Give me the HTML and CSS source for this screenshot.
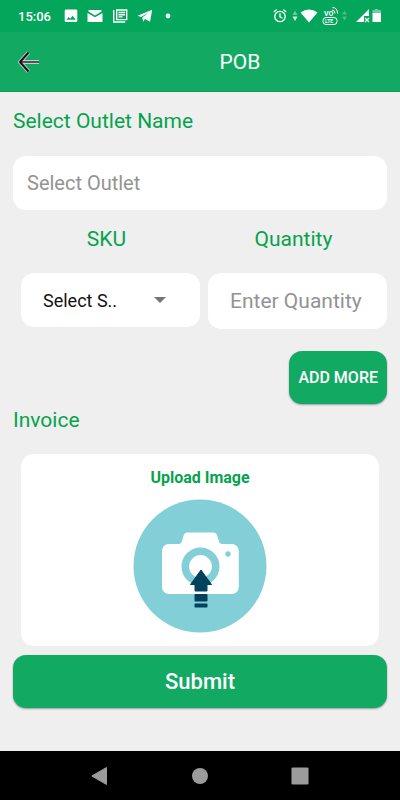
FILE: index.html
```html
<!DOCTYPE html>
<html lang="en">
<head>
<meta charset="utf-8">
<meta name="viewport" content="width=device-width, initial-scale=1">
<title>POB</title>
<link rel="stylesheet" href="styles.css">
</head>
<body>
<div class="status">
  <div class="status-group">
    <span class="clock">15:06</span>
    <svg width="14" height="14" viewBox="0 0 14 14"><path fill="#fff" fill-rule="evenodd" d="M2 .5h10a1.300 1.300 0 0 1 1.300 1.300v10a1.300 1.300 0 0 1-1.300 1.300H2A1.300 1.300 0 0 1 .7 11.800v-10A1.300 1.300 0 0 1 2 .5zM2.500 10.700h9L8.700 6.800 6.300 9.700 4.600 7.900z"/></svg>
    <svg width="16" height="14" viewBox="0 0 16 14"><path fill="#fff" d="M1.500 1h13v1.600L8 6.400 1.500 2.600zM.5 4L8 8.200 15.500 4v9H.5z"/></svg>
    <svg width="16" height="14" viewBox="0 0 16 14"><path fill="none" stroke="#fff" stroke-width="1.400" d="M1.700 1v12h11.500M4.700 1h10v9.600h-10zM6.500 3.500h6.500M6.500 5.700h6.500M6.500 7.900h4"/></svg>
    <svg width="16" height="14" viewBox="0 0 16 14"><path fill="#fff" d="M15.200.8L13 12.800 8 9.900 6.200 12.700 5.300 8.500 11.500 3.600 4 8 .6 6.800z"/></svg>
    <svg width="10" height="14" viewBox="0 0 10 14"><circle cx="6" cy="7" r="2.400" fill="#fff"/></svg>
  </div>
  <div class="status-group status-signals">
    <svg width="14" height="16" viewBox="0 0 14 16"><g fill="none" stroke="#fff" stroke-width="1.300"><circle cx="7" cy="8.500" r="5.200"/><path d="M7 5.200v3.600l2.400 1.500M.8 4L3.600 1.600M13.200 4l-2.800-2.400"/></g></svg>
    <svg class="traffic" width="6" height="16" viewBox="0 0 6 16"><path fill="#6cc99c" d="M.5 7L3 2.500 5.500 7z"/><path fill="#d5f0e2" d="M.5 8.500h5L3 13z"/></svg>
    <svg width="18" height="16" viewBox="0 0 18 16"><path fill="#fff" d="M.5 4.500Q9-1.300 17.500 4.500L9 14.500z"/></svg>
    <svg class="volte" width="18" height="20" viewBox="0 0 18 20"><text x="3" y="10" fill="#fff">VO</text><path fill="none" stroke="#fff" d="M11 4q3 0 3 3.500M11.500 1.500q5 0 5 6"/><rect x="2" y="11.500" width="14" height="7" rx="3" fill="none" stroke="#fff"/><text x="4" y="17" fill="#fff">LTE</text></svg>
    <svg width="8" height="16" viewBox="0 0 8 16"><path fill="#4cbd89" d="M1 6.500l2.500-4 2.500 4zM1 8.500h5l-2.500 4z"/></svg>
    <svg class="signal" width="14" height="16" viewBox="0 0 14 16"><path fill="#fff" d="M13 1v7H8v6H0z"/><path stroke="#fff" stroke-width="1.300" d="M9 10l4 4M13 10l-4 4"/></svg>
    <svg width="10" height="16" viewBox="0 0 10 16"><path fill="#6fcca0" d="M3 1h3v1h3v3H.5V2H3z"/><path fill="#fff" d="M.5 5H9v9H.5z"/></svg>
  </div>
</div>
<header class="appbar">
  <button class="back" type="button" aria-label="Back">
    <svg width="24" height="26" viewBox="0 0 24 26"><g fill="none" stroke-linejoin="round"><path stroke="#c4cdc8" stroke-width="4" d="M11.500 3.500L3 13l8.500 9.500M3 13h19"/><path stroke="#555" stroke-width="2" d="M3 13h19"/><path stroke="#161216" stroke-width="2" d="M11.500 3.500L3 13l8.500 9.500"/></g></svg>
  </button>
  <h1 class="title">POB</h1>
</header>
<main class="form-page">
  <form class="form">
    <label class="heading" for="outlet">Select Outlet Name</label>
    <input class="field outlet" id="outlet" type="text" placeholder="Select Outlet">
    <div class="labels">
      <label class="heading" for="sku">SKU</label>
      <label class="heading" for="quantity">Quantity</label>
    </div>
    <div class="row">
      <div class="select-wrap">
        <select class="field sku" id="sku"><option>Select S..</option></select>
        <svg class="caret" width="12" height="6" viewBox="0 0 12 6"><path fill="#757575" d="M0 0h12L6 6z"/></svg>
      </div>
      <input class="field quantity" id="quantity" type="text" inputmode="numeric" placeholder="Enter Quantity">
    </div>
    <button class="button add" type="button">ADD MORE</button>
    <h2 class="heading">Invoice</h2>
    <button class="upload" type="button">
      <span>Upload Image</span>
      <svg width="134" height="134" viewBox="0 0 134 134">
        <circle cx="67" cy="67" r="66.500" fill="#82cfd7"/>
        <path fill="#fff" d="M35 45h10c2 0 3-.5 3.600-2.300l2.200-6.500c.6-1.800 1.600-2.700 3.600-2.700h26c2 0 3 .9 3.600 2.700l2.200 6.500c.6 1.800 1.600 2.300 3.600 2.300h9a7 7 0 0 1 7 7v36a7 7 0 0 1-7 7H36a7 7 0 0 1-7-7V52a7 7 0 0 1 6-7z"/>
        <circle cx="67.500" cy="67.500" r="15.200" fill="#fff" stroke="#82cfd7" stroke-width="7.600"/>
        <circle cx="95" cy="55" r="2.700" fill="#82cfd7"/>
        <path fill="#03425d" stroke="#03425d" stroke-linejoin="round" d="M68 71L57.500 85.500h4.500v6.500h12v-6.500h4.500z"/>
        <path stroke="#fff" stroke-width="1.500" d="M61 93.800h14"/>
        <rect x="61.500" y="95" width="13" height="7.500" rx="1" fill="#03425d"/>
        <rect x="61.500" y="104.500" width="13" height="4" rx="1" fill="#03425d"/>
      </svg>
    </button>
    <button class="button submit" type="submit">Submit</button>
  </form>
</main>
<nav class="navbar">
  <button type="button" aria-label="Back"><svg width="18" height="20" viewBox="0 0 18 20"><path fill="#9b9b9b" stroke="#9b9b9b" stroke-linejoin="round" d="M.8 10L15.500 1.500v17z"/></svg></button>
  <button type="button" aria-label="Home"><svg width="18" height="20" viewBox="0 0 18 20"><circle cx="9" cy="10" r="8" fill="#9b9b9b"/></svg></button>
  <button type="button" aria-label="Recent apps"><svg width="18" height="20" viewBox="0 0 18 20"><rect x=".5" y="1.500" width="17" height="17" rx="1" fill="#9b9b9b"/></svg></button>
</nav>
</body>
</html>
```
FILE: styles.css
```css
* {
  box-sizing: border-box;
}

body {
  margin: 0;
  min-height: 100vh;
  display: flex;
  flex-direction: column;
  background: #efefef;
  font-family: Roboto, sans-serif;
}

button,
input,
select {
  font-family: inherit;
  border: 0;
  margin: 0;
}

button {
  cursor: pointer;
}

svg {
  display: block;
  flex: none;
}

.status {
  height: 32px;
  padding: 0 18px;
  display: flex;
  align-items: center;
  justify-content: space-between;
  background: #03a65a;
}

.status-group {
  display: flex;
  align-items: center;
  gap: 9px;
}

.status-signals {
  gap: 2px;
}

.clock {
  margin-right: 4px;
  color: #fff;
  font-size: 13px;
  font-weight: 500;
}

.traffic {
  margin-left: 3px;
}

.volte {
  margin-left: 1px;
  font-size: 7px;
  font-weight: 700;
}

.volte text:last-child {
  font-size: 5px;
}

.signal {
  margin-left: 5px;
}

.appbar {
  height: 60px;
  display: grid;
  grid-template-columns: 80px 1fr;
  align-items: center;
  background: #12aa62;
  border-bottom: 1px solid #0c9c57;
}

.back {
  justify-self: start;
  padding: 0 17px;
  background: none;
}

.title {
  margin: 0;
  color: #fff;
  font-size: 21px;
  font-weight: 400;
  text-align: center;
}

.form-page {
  flex: 1;
  padding: 16px 13px;
}

.form {
  display: flex;
  flex-direction: column;
}

.heading {
  margin: 0;
  color: #05a34c;
  font-size: 21px;
  font-weight: 400;
  line-height: 26px;
}

.field {
  width: 100%;
  height: 54px;
  border-radius: 13px;
  background: #fff;
}

.field::placeholder {
  color: #939393;
  opacity: 1;
}

.outlet {
  margin: 22px 0 16px;
  padding: 0 14px;
  font-size: 20px;
}

.labels {
  display: grid;
  grid-template-columns: 1fr 1fr;
  text-align: center;
}

.row {
  display: grid;
  grid-template-columns: 1fr 1fr;
  gap: 8px;
  margin: 21px 0 0 8px;
}

.select-wrap {
  position: relative;
}

.sku {
  appearance: none;
  padding: 0 22px;
  color: #111;
  font-size: 18px;
}

.caret {
  position: absolute;
  right: 34px;
  top: 24px;
  pointer-events: none;
}

.quantity {
  height: 56px;
  padding: 0 22px;
  font-size: 21px;
}

.button {
  height: 53px;
  border-radius: 13px;
  background: #12aa62;
  color: #fff;
  font-weight: 500;
  box-shadow: 0 1px 2px rgba(0, 0, 0, 0.35);
}

.add {
  align-self: flex-end;
  margin: 22px 0 3px;
  padding: 0 9px;
  font-size: 16px;
}

.upload {
  margin: 21px 8px 9px;
  padding: 14px 0 13px;
  display: flex;
  flex-direction: column;
  align-items: center;
  gap: 11px;
  border-radius: 13px;
  background: #fff;
  color: #05a34c;
  font-size: 16px;
  font-weight: 700;
  line-height: 20px;
}

.submit {
  font-size: 22px;
}

.navbar {
  height: 49px;
  padding: 0 50px;
  display: grid;
  grid-template-columns: repeat(3, 1fr);
  background: #000;
}

.navbar button {
  display: flex;
  align-items: center;
  justify-content: center;
  padding: 0;
  background: none;
}
```
